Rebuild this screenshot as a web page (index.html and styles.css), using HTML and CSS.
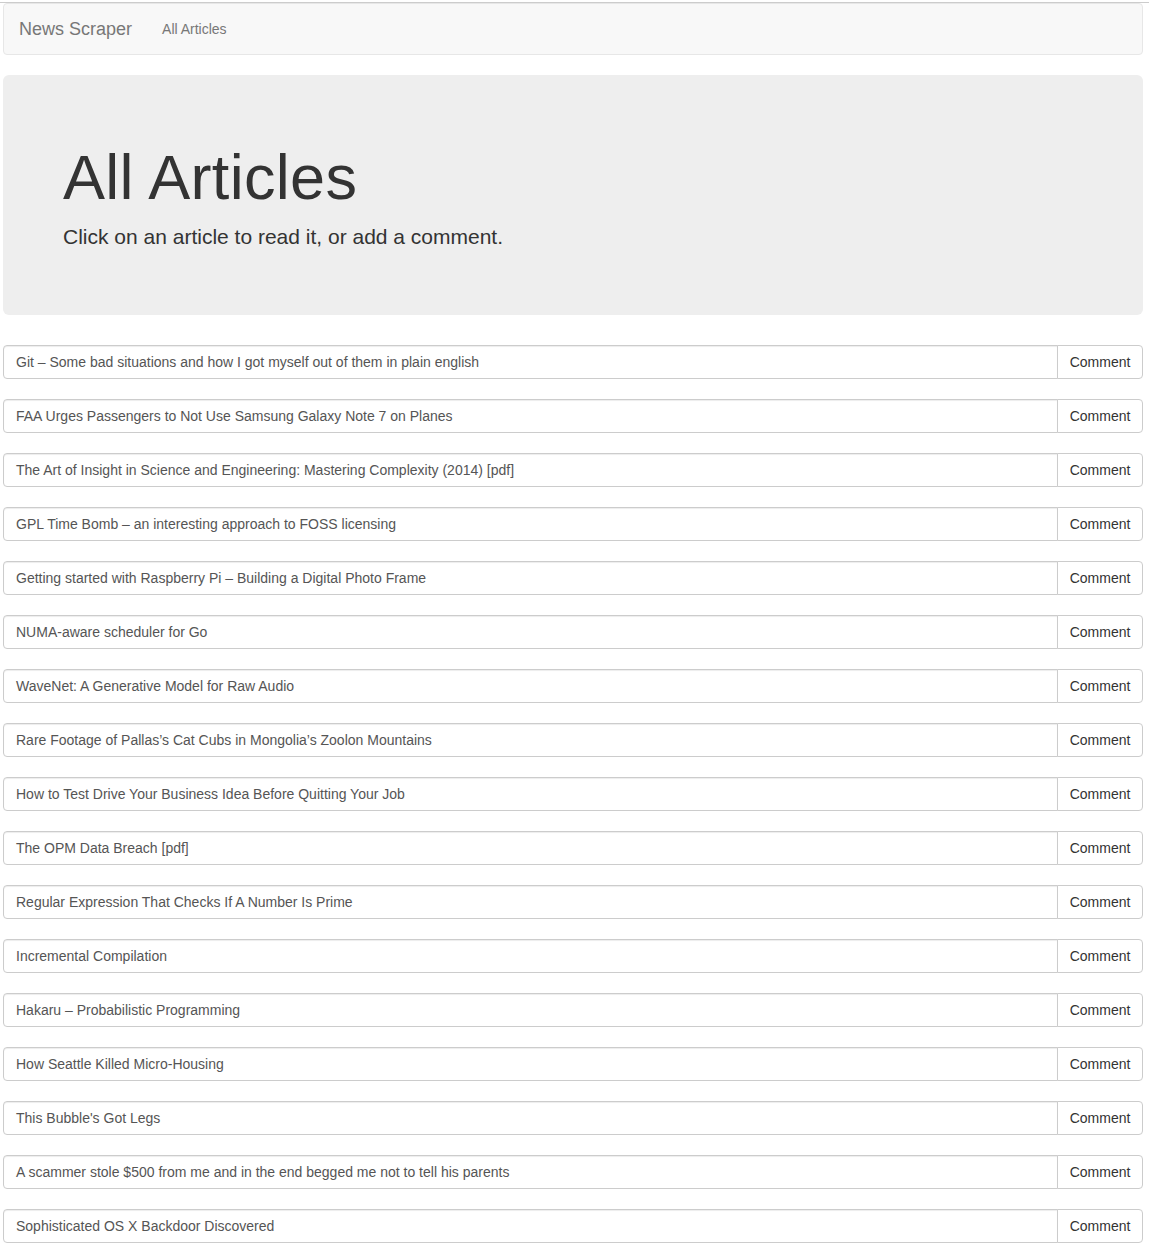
FILE: index.html
```html
<!DOCTYPE html>
<html>
<head>
<meta charset="utf-8">
<title>News Scraper</title>
<link rel="stylesheet" href="styles.css">
</head>
<body>
<div class="topline"></div>
<div class="container">
  <nav class="navbar">
    <a class="brand" href="#">News Scraper</a>
    <a class="nav-link" href="#">All Articles</a>
  </nav>
  <div class="jumbotron">
    <h1>All Articles</h1>
    <p>Click on an article to read it, or add a comment.</p>
  </div>
  <div class="articles">
    <div class="input-group"><a class="form-control" href="#">Git – Some bad situations and how I got myself out of them in plain english</a><button class="btn">Comment</button></div>
    <div class="input-group"><a class="form-control" href="#">FAA Urges Passengers to Not Use Samsung Galaxy Note 7 on Planes</a><button class="btn">Comment</button></div>
    <div class="input-group"><a class="form-control" href="#">The Art of Insight in Science and Engineering: Mastering Complexity (2014) [pdf]</a><button class="btn">Comment</button></div>
    <div class="input-group"><a class="form-control" href="#">GPL Time Bomb – an interesting approach to FOSS licensing</a><button class="btn">Comment</button></div>
    <div class="input-group"><a class="form-control" href="#">Getting started with Raspberry Pi – Building a Digital Photo Frame</a><button class="btn">Comment</button></div>
    <div class="input-group"><a class="form-control" href="#">NUMA-aware scheduler for Go</a><button class="btn">Comment</button></div>
    <div class="input-group"><a class="form-control" href="#">WaveNet: A Generative Model for Raw Audio</a><button class="btn">Comment</button></div>
    <div class="input-group"><a class="form-control" href="#">Rare Footage of Pallas’s Cat Cubs in Mongolia’s Zoolon Mountains</a><button class="btn">Comment</button></div>
    <div class="input-group"><a class="form-control" href="#">How to Test Drive Your Business Idea Before Quitting Your Job</a><button class="btn">Comment</button></div>
    <div class="input-group"><a class="form-control" href="#">The OPM Data Breach [pdf]</a><button class="btn">Comment</button></div>
    <div class="input-group"><a class="form-control" href="#">Regular Expression That Checks If A Number Is Prime</a><button class="btn">Comment</button></div>
    <div class="input-group"><a class="form-control" href="#">Incremental Compilation</a><button class="btn">Comment</button></div>
    <div class="input-group"><a class="form-control" href="#">Hakaru – Probabilistic Programming</a><button class="btn">Comment</button></div>
    <div class="input-group"><a class="form-control" href="#">How Seattle Killed Micro-Housing</a><button class="btn">Comment</button></div>
    <div class="input-group"><a class="form-control" href="#">This Bubble's Got Legs</a><button class="btn">Comment</button></div>
    <div class="input-group"><a class="form-control" href="#">A scammer stole $500 from me and in the end begged me not to tell his parents</a><button class="btn">Comment</button></div>
    <div class="input-group"><a class="form-control" href="#">Sophisticated OS X Backdoor Discovered</a><button class="btn">Comment</button></div>
  </div>
</div>
</body>
</html>
```
FILE: styles.css
```css
* { box-sizing: border-box; }
html, body {
  margin: 0;
  padding: 0;
  background: #fff;
}
body {
  font-family: "Liberation Sans", Arial, Helvetica, sans-serif;
  font-size: 14px;
  line-height: 1.42857143;
  color: #333;
}
.topline {
  margin-top: 2px;
  height: 1px;
  background: #cccccc;
}
.container {
  width: 1146px;
  padding: 0 3px;
}
.navbar {
  display: flex;
  align-items: center;
  height: 52px;
  background: #f8f8f8;
  border: 1px solid #e7e7e7;
  border-radius: 4px;
  margin-bottom: 20px;
}
.navbar a { text-decoration: none; color: #777; }
.brand {
  font-size: 18px;
  line-height: 20px;
  padding: 15px;
}
.nav-link {
  font-size: 14px;
  line-height: 20px;
  padding: 15px;
}
.jumbotron {
  background: #eee;
  border-radius: 6px;
  padding: 48px 60px;
  margin-bottom: 30px;
}
.jumbotron h1 {
  font-size: 63px;
  font-weight: 500;
  line-height: 1.1;
  margin: 20px 0 10px;
  color: #333;
  letter-spacing: 0.3px;
}
.jumbotron p {
  font-size: 21px;
  font-weight: 200;
  margin: 0 0 15px;
  line-height: 1.42857143;
}
.input-group {
  display: flex;
  margin-bottom: 20px;
}
.form-control {
  flex: 1;
  display: block;
  height: 34px;
  padding: 6px 12px;
  font-size: 14px;
  line-height: 20px;
  color: #555;
  text-decoration: none;
  background: #fff;
  border: 1px solid #ccc;
  border-radius: 4px 0 0 4px;
  box-shadow: inset 0 1px 1px rgba(0,0,0,.075);
}
.btn {
  width: 86px;
  height: 34px;
  margin-left: -1px;
  padding: 6px 0;
  text-align: center;
  font-family: inherit;
  font-size: 14px;
  line-height: 20px;
  color: #333;
  background: #fff;
  border: 1px solid #ccc;
  border-radius: 0 4px 4px 0;
  cursor: pointer;
}
```
